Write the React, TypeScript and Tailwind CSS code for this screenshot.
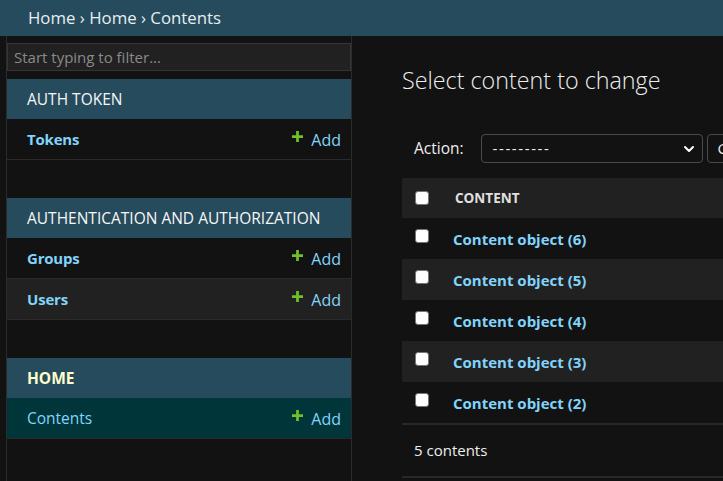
import { ChevronDown } from 'lucide-react'

const sections = [
  {
    title: 'AUTH TOKEN',
    current: false,
    models: [{ name: 'Tokens' }],
  },
  {
    title: 'AUTHENTICATION AND AUTHORIZATION',
    current: false,
    models: [{ name: 'Groups' }, { name: 'Users' }],
  },
  {
    title: 'HOME',
    current: true,
    models: [{ name: 'Contents', selected: true }],
  },
]

const rows = [6, 5, 4, 3, 2]

function Checkbox() {
  return <span className="block w-[14px] h-[14px] rounded-[3px] bg-white border border-[#767676]" />
}

function AddLink() {
  return (
    <span className="flex items-center gap-[8px] text-[#81d4fa] font-normal text-[16px]">
      <svg width="11" height="11" viewBox="0 0 12 12" className="-mt-[7px]">
        <path d="M4.5 0h3v4.5H12v3H7.5V12h-3V7.5H0v-3h4.5z" fill="#70bf2b" />
      </svg>
      Add
    </span>
  )
}

export default function App() {
  return (
    <div className="w-[723px] h-[481px] overflow-hidden bg-[#121212] text-[#eeeeee] font-['Open_Sans',sans-serif]">
      <div className="h-9 bg-[#264b5d] pl-7 flex items-center text-[16.8px] text-[#e6eef2]">
        Home › Home › Contents
      </div>

      <div className="flex h-[445px]">
        <div className="w-[6px] shrink-0" />

        <nav className="w-[346px] shrink-0 border-x border-[#2b2b2b] pt-[7px]">
          <div className="h-[28px] bg-[#212121] border border-[#353535] flex items-center px-[6px] text-[15px] text-[#8a8a8a]">
            Start typing to filter...
          </div>

          <div className="mt-2 flex flex-col gap-[38px]">
            {sections.map((s) => (
              <div key={s.title}>
                <div
                  className={`h-10 bg-[#264b5d] flex items-center pl-5 text-[15.5px] pt-[1px] ${
                    s.current ? 'font-bold text-[#ffffcc]' : 'text-[#f7f7f7]'
                  }`}
                >
                  {s.title}
                </div>
                {s.models.map((m, i) => (
                  <div
                    key={m.name}
                    className={`h-[41px] border-b border-[#2a2a2a] flex items-center justify-between pl-5 pr-[10px] text-[15px] pt-[1px] ${
                      'selected' in m && m.selected
                        ? 'bg-[#00363a]'
                        : i % 2 === 1
                          ? 'bg-[#212121]'
                          : 'bg-[#121212]'
                    }`}
                  >
                    <span
                      className={`text-[#81d4fa] ${'selected' in m && m.selected ? 'font-normal text-[15.5px]' : 'font-bold tracking-[-0.2px]'}`}
                    >
                      {m.name}
                    </span>
                    <AddLink />
                  </div>
                ))}
              </div>
            ))}
          </div>
        </nav>

        <main className="flex-1 min-w-0 pl-[50px] pt-[27px]">
          <h1 className="text-[23.3px] font-light text-[#eeeeee] leading-[34px]">Select content to change</h1>

          <div className="mt-[37px] flex items-center pl-3 gap-[17px]">
            <span className="text-[15.5px] text-[#eeeeee]">Action:</span>
            <div className="flex items-center gap-1">
              <div className="w-[222px] h-[29px] rounded-[4px] border border-[#4a4a4a] bg-[#121212] flex items-center justify-between pl-[11px] pr-[5px] text-[15px]">
                <span className="tracking-[1.6px]">---------</span>
                <ChevronDown size={16} strokeWidth={3} className="text-white" />
              </div>
              <div className="h-[29px] rounded-[4px] border border-[#4a4a4a] bg-[#121212] flex items-center px-[10px] text-[15px] shrink-0">
                Go
              </div>
            </div>
          </div>

          <div className="mt-[15px] w-[400px]">
            <div className="h-10 bg-[#212121] flex items-center">
              <div className="w-[53px] pl-[13px]">
                <Checkbox />
              </div>
              <span className="text-[13.5px] font-bold text-[#e0e0e0]">CONTENT</span>
            </div>
            {rows.map((n, i) => (
              <div
                key={n}
                className={`h-[41px] flex ${i % 2 === 1 ? 'bg-[#212121]' : 'bg-[#121212]'}`}
              >
                <div className="w-[51px] pl-[13px] pt-[11px]">
                  <Checkbox />
                </div>
                <span className="self-center text-[15px] font-bold text-[#81d4fa] pt-[2px]">
                  Content object ({n})
                </span>
              </div>
            ))}
            <div className="h-[55px] border-y-2 border-[#272727] flex items-center pl-3 text-[15px]">
              5 contents
            </div>
          </div>
        </main>
      </div>
    </div>
  )
}
